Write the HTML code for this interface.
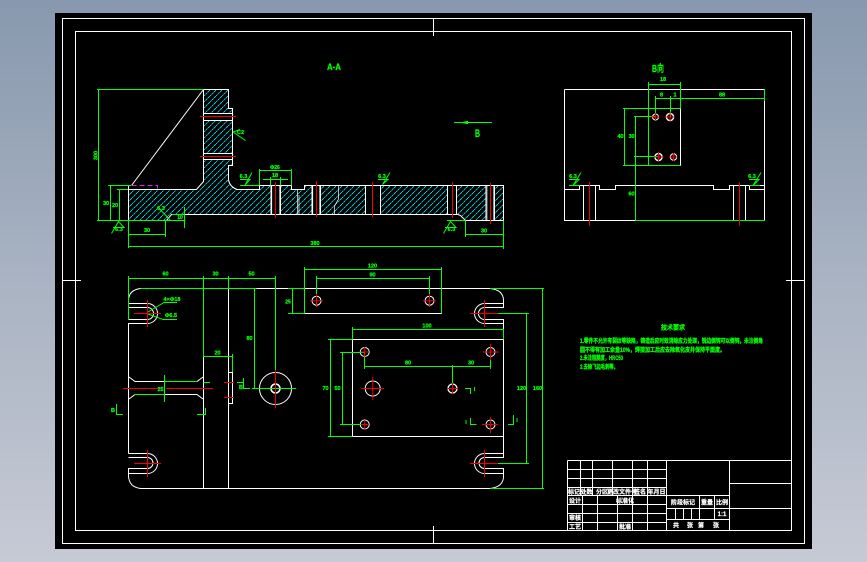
<!DOCTYPE html>
<html lang="zh"><head><meta charset="utf-8"><title>CAD</title>
<style>
html,body{margin:0;padding:0;width:867px;height:562px;overflow:hidden;background:linear-gradient(180deg,#8898ae 0%,#a9b3c2 50%,#c6cad5 100%)}
svg{position:absolute;left:0;top:0;display:block}
text{font-family:"Liberation Sans","Noto Sans CJK SC",sans-serif;font-weight:bold}
</style></head><body>
<svg width="867" height="562" viewBox="0 0 867 562" xmlns="http://www.w3.org/2000/svg">
<defs>
<pattern id="h" width="6" height="6" patternUnits="userSpaceOnUse"><path d="M-1 7L7 -1" stroke="#10e8f5" stroke-width=".8" stroke-dasharray="3 .5"/></pattern>
<clipPath id="sec"><path d="M203.5 89.5H228.5V108.5H232.5V165.5H228.5V180Q230 187 237 189.5H259.5V185.5H291.5V189.5H304.5V185.5H503.5V220.5H465.5L460.5 215.5L458 214.5H171.5L166.5 220.5H128.5V189.5H196.5L203.5 181.5Z"/></clipPath>
</defs>
<rect x="55" y="13" width="757" height="536" fill="#000"/>

<!-- hatching -->
<rect x="120" y="85" width="390" height="140" fill="url(#h)" clip-path="url(#sec)"/>
<g fill="#000">
<rect x="203" y="113.5" width="31" height="6.5"/><rect x="203" y="153.5" width="31" height="6"/>
<rect x="271" y="185" width="9" height="30"/><rect x="312" y="185" width="9" height="30"/><rect x="365.5" y="185" width="14.5" height="30"/><rect x="447.5" y="185" width="9" height="30"/><rect x="486" y="185" width="8.5" height="36"/>
</g>

<!-- frames -->
<g fill="none" stroke="#fff" stroke-width="1">
<rect x="62.5" y="18.5" width="742" height="525"/>
<rect x="75.5" y="31.5" width="716" height="499"/>
<path d="M433.5 18V36M433.5 526V543M62 280.5H81M786 280.5H805"/>
</g>

<!-- section A-A white -->
<g fill="none" stroke="#fff" stroke-width="1">
<path d="M203.5 89.5H228.5V108.5H232.5V165.5H228.5V180Q230 187 237 189.5H259.5V185.5H291.5V189.5H304.5V185.5H503.5V220.5H465.5L460.5 215.5L458 214.5H171.5L166.5 220.5H128.5V185.5M128.5 189.5H196.5L203.5 181.5V89.5"/>
<path d="M131.5 185.5L203.5 89.5"/>
<path d="M203.5 113.5H232.5M203.5 120.5H232.5M203.5 153.5H232.5M203.5 159.5H232.5"/>
<path d="M271 185.5V214.5M280.5 185.5V214.5M312 185.5V214.5M320.5 185.5V214.5M365.5 185.5V214.5M380.5 185.5V214.5M447.5 185.5V214.5M456.5 185.5V214.5M486 185.5V220.5M494.5 185.5V220.5"/>
<path d="M271.8 185.5V214.5M279.7 185.5V214.5M312.8 185.5V214.5M319.7 185.5V214.5M487 185.5V220.5M493.7 185.5V220.5" stroke-width=".6"/>
<path d="M297.5 190V214M299 195V214M338.5 185.5V199L334.5 206V214" stroke-width=".7"/>
</g>
<path d="M131.5 185.5H157.5V189.5" fill="none" stroke="#e020e0" stroke-dasharray="5 3"/>

<!-- view B white -->
<g fill="none" stroke="#fff" stroke-width="1">
<path d="M564.5 89.5H764.5V220.5H635.5M635.5 220.5H564.5V89.5"/>
<path d="M564.5 189.5H579.5V185.5H599.5V189.5H615.5V185.5H713.5V189.5H729.5V185.5H764.5M749.5 185.5V189.5H764.5"/>
<path d="M583.5 185.5V220.5M595.5 185.5V220.5M733.5 185.5V220.5M745.5 185.5V220.5"/>
<rect x="648.5" y="108.5" width="32" height="57"/>
<circle cx="655.5" cy="117" r="3"/><circle cx="670" cy="117" r="3.6" stroke-width="1.4"/><circle cx="658.5" cy="157" r="3.6" stroke-width="1.4"/><circle cx="673.5" cy="157" r="3.2"/>
</g>

<!-- plan white -->
<g fill="none" stroke="#fff" stroke-width="1">
<path d="M140.5 288.5H490Q503.5 290 503.5 300.5V307.5H484.5A6 6 0 0 0 484.5 319.5H503.5V453.5H484.5M484.5 303.5H503.5M484.5 303.5A10 10 0 0 0 484.5 323.5H503.5M484.5 453.5A10 10 0 0 0 484.5 473.5H503.5V468.5H484.5A5.500 5.500 0 0 1 484.5 457.500H503.5V453.500M503.5 473.5V477Q503 487 490 488.5H140.500Q129 487 128.500 476V468.500H147.500A5.500 5.500 0 0 0 147.500 457.500H128.500M128.500 453.500H147.500A10 10 0 0 1 147.500 473.500H128.500M128.500 453.500V323.500H147.500A10 10 0 0 0 147.500 303.500H128.500M128.500 307.500H147.500A6 6 0 0 1 147.500 319.500H128.500M128.500 303.500V300Q129 290 140.500 288.500"/>
<path d="M129 377L135 381.500H197L203 377M129 399L135 394.500H197L203 399"/>
<path d="M203.500 357V488.500M228.500 288.500V488.500"/>
<path d="M229 372.500H232.500V403.500H229"/>
<circle cx="275.500" cy="388.500" r="16"/><circle cx="275.500" cy="388.500" r="4.500" stroke-width="1.600"/>
<path d="M304.500 288.500V313.500H441.500V288.500"/>
<circle cx="316.500" cy="300.700" r="4.500"/><circle cx="429.500" cy="300.700" r="4.500"/>
<rect x="352.500" y="339.500" width="151" height="97"/>
<circle cx="364.700" cy="352" r="4.500"/><circle cx="490.500" cy="352" r="4.500"/><circle cx="364.700" cy="424.500" r="4.500"/><circle cx="490.500" cy="424.500" r="4.500"/>
<circle cx="372.700" cy="388.500" r="7.500"/><circle cx="452.500" cy="388.500" r="4.500" stroke-width="1.300"/>
</g>

<!-- green dimensions -->
<g fill="none" stroke="#00ff00" stroke-width="1">
<path d="M97 89.500H203.500M98.500 89.500V220.500M97 220.500H185.500M108 185.500H131M110.500 185.500V220.500M117 189.500H128M119.500 189.500V220.500M128.500 220.500V248M128.500 234.500H165.500M165.500 220.500V237M128 246.500H503.500M503.500 220.500V249M465.500 234.500H503.500M465.500 220.500V237M447 220.500H465.500M184.500 207V228M172 214.500H184.500"/>
<path d="M259.500 169V185.500M291.500 169V185.500M259.500 170.500H291.500M270.500 177V185.500M280.500 177V185.500M263 179.500H288"/>
<path d="M240 185.500H259M240 179.500H250L245 185L252 172.500M378 179.500H388L382.500 184.500L390 172.500M569 179.500H579L573 185.500L581 172.500M569 185.500H580M749 179.500H759L753 185.500L761 172.500M749 185.500H760"/>
<path d="M111.500 233.500L118.500 221.500L124 227.500H113M443.500 233.500L450.500 221.500L456 227.500H445M245.500 140.500L233 132L240 129.500M158 207L170 220"/>
<path d="M454 122.500H492"/><path d="M460 122.500L468 120.700V124.300Z" fill="#00ff00" stroke="none"/>

<path d="M648.500 82V165.500M680.500 82V108.500M648.500 84.500H680.500M655.500 96V117M670.500 96V117M655.500 98.500H764.500M764.500 89V101M623 108.500H680.500M623 165.500H680.500M624.500 108.500V165.500M634 116.500H655.500M634 156.500H658.500M635.500 116.500V220.500H765"/>

<path d="M128.500 276V320M203.500 276V357M228.500 276V288.500M275.500 276V370M128 278.500H275.500M140.500 288.500H256.500M254.500 288.500V388.500M252 388.500H296M203.500 356.500H232.500M232.500 354V372M164.500 375V402M164.500 381.500H197M134 394.500H164.500"/>
<path d="M148 312L164 302.500H177M148 314L163 319.500H177"/>
<path d="M116.500 404V414.500H123M197 414.500H205.500V408M203.500 382.500H210M237 382.500H243.500V388.500H250M243.500 382.500V378"/>
<path d="M304.500 267V313.500M441.500 267V313.500M304 269.500H442M316.500 276V300.500M429.500 276V300.500M316.500 278.500H429.500M292.500 288.500V313.500M288 288.500H304.500M288 313.500H304.500"/>
<path d="M352.500 327V339.500M503.500 329V339.500M352.500 329.500H503.500M328 339.500H352.500M328 436.500H352.500M330.500 339.500V436.500M342.500 352V424.500M340 352.500H365M340 424.500H365M364.500 352V369M364.500 366.500H490.500M490.500 352V369M452.500 365V385"/>
<path d="M497.500 313.500H529M497.500 463.500H529M526.500 313.500V463.500M490 288.500H544M490 488.500H544M542.500 288.500V488.500"/>
<path d="M465 388.500H470.500V394M470.500 418V424.500H476.500M508 424.500H513.500V415"/>
</g>

<!-- red centre lines -->
<g fill="none" stroke="#f00000" stroke-width="1">
<path d="M200 116.500H236M200 156.500H236M275.500 182V218M316.500 181V217M372.500 182V217M452.500 182V218M490.500 183V224"/>
<path d="M589.500 182V226M739.500 182V226M651 117H659.500M655.500 113V120M664.500 117H674M670 112V122M654 157H663.500M658.500 152V162M669 157H677M673.500 153V161"/>
<path d="M134 313.500H161M147.500 300V327M134 463.500H161M147.500 450V477M123 388.500H160M166 388.500H213M224 382.500H234M224 397.500H234M275.500 370V408"/>
<path d="M310 300.700H323M316.500 294V307M423 300.700H436M429.500 294V307"/>
<path d="M470 313.500H498M484.500 300V327M470 463.500H498M484.500 450V477M483 352H499M490.500 344V360M482 424.500H498M490.500 417V433M361 352H369M364.700 347V357M361 424.500H369M364.700 420V430M361.500 388.500H384M372.700 377V400M447 388.500H458M452.500 383V394"/>
</g>

<!-- green text -->
<g fill="#00ff00" stroke="#00ff00" stroke-width=".25" font-size="5.500" text-anchor="middle">
<text x="334" y="70" font-size="9" textLength="14" lengthAdjust="spacingAndGlyphs">A-A</text>
<text x="477.500" y="137" font-size="11" textLength="5" lengthAdjust="spacingAndGlyphs">B</text>
<text x="658" y="72" font-size="10" textLength="12" lengthAdjust="spacingAndGlyphs">B向</text>
<text x="95" y="158" transform="rotate(-90 95 155.500)">300</text>
<text x="106" y="205">30</text><text x="115" y="207">20</text>
<text x="147" y="232">30</text>
<text x="180" y="219" font-size="5">10</text>
<text x="161" y="210">6.3</text>
<text x="275" y="169" font-size="5">Φ26</text>
<text x="275" y="177">18</text>
<text x="240.500" y="134">C2</text>
<text x="243.500" y="178">6.3</text>
<text x="382" y="178">6.3</text>
<text x="573" y="178">6.3</text>
<text x="752" y="178">6.3</text>
<text x="119" y="231">6.3</text>
<text x="451.500" y="231">6.3</text>
<text x="315" y="245">380</text>
<text x="484" y="232.500">30</text>
<text x="663" y="81">18</text>
<text x="661.500" y="96.500">8</text><text x="675" y="96.500">1</text><text x="722" y="96.500">88</text>
<text x="620.500" y="138">40</text><text x="631.500" y="138">30</text><text x="631.500" y="195.500">60</text>
<text x="165.500" y="275.500">60</text><text x="215.500" y="275.500">30</text><text x="251.500" y="275.500">50</text>
<text x="217.500" y="354.500">20</text><text x="249.500" y="340">80</text>
<text x="288" y="303.500" font-size="5">25</text>
<text x="160.500" y="391">25</text>
<text x="172" y="301">4×Φ18</text><text x="171" y="317">Φ6.5</text>
<text x="113" y="412">B</text><text x="241" y="389">B</text>
<text x="372.500" y="267.500">120</text><text x="372.500" y="276.500">90</text>
<text x="427" y="327.500">100</text><text x="408" y="364.500">80</text><text x="471" y="364.500">30</text>
<text x="325.500" y="390">70</text><text x="337.500" y="390">50</text>
<text x="521.500" y="390">120</text><text x="537.500" y="390">160</text>
<text x="474.500" y="391">I</text><text x="466" y="424">I</text><text x="517" y="422">I</text>
</g>

<!-- tech notes -->
<g fill="#00ff00" stroke="#00ff00" stroke-width=".3">
<text x="661" y="329.500" font-size="6.500" textLength="24" lengthAdjust="spacingAndGlyphs">技术要求</text>
<text x="580" y="343" font-size="6" textLength="183" lengthAdjust="spacingAndGlyphs">1.零件不允许有裂纹等缺陷，铸造后应时效消除应力处理，锐边倒钝可以倒钝，未注倒角</text>
<text x="580" y="352" font-size="6" textLength="145" lengthAdjust="spacingAndGlyphs">圆不得有加工余量10%，焊接加工后应去除氧化皮并保持平面度。</text>
<text x="580" y="360" font-size="6" textLength="43" lengthAdjust="spacingAndGlyphs">2.未注粗糙度，HRC50</text>
<text x="580" y="369" font-size="6" textLength="38" lengthAdjust="spacingAndGlyphs">3.去除飞边毛刺等。</text>
</g>

<!-- title block -->
<g fill="none" stroke="#fff" stroke-width="1">
<path d="M567.500 460.500H791M567.500 469.500H666.500M567.500 478.500H666.500M567.500 487.500H666.500M567.500 495.500H729.500M567.500 504.500H666.500M567.500 513.500H666.500M567.500 522.500H666.500M666.500 508.500H791M666.500 519.500H729.500M729.500 483.500H791"/>
<path d="M567.500 460.500V530.500M580.500 460.500V495.500M592.500 460.500V495.500M612.500 460.500V495.500M632.500 460.500V530.500M647.500 460.500V530.500M666.500 460.500V530.500M582.500 495.500V530.500M597.500 495.500V530.500M617.500 495.500V530.500M729.500 460.500V530.500M699.500 495.500V519.500M714.500 495.500V519.500M675.500 508.500V519.500M683.500 508.500V519.500M691.500 508.500V519.500"/>
</g>
<g fill="#fff" stroke="#fff" stroke-width=".2" font-size="6" text-anchor="middle">
<text x="574" y="494">标记</text><text x="586.500" y="494">处数</text><text x="602" y="494">分区</text><text x="622" y="494">更改文件号</text><text x="640" y="494">签名</text><text x="656.500" y="494">年月日</text>
<text x="575" y="503">设计</text><text x="625" y="503">标准化</text>
<text x="575" y="520">审核</text><text x="575" y="529">工艺</text><text x="625" y="529">批准</text>
<text x="683" y="504.500">阶段标记</text><text x="707" y="504.500">重量</text><text x="722" y="504.500">比例</text>
<text x="722" y="516">1:1</text>
<text x="676" y="527.500">共</text><text x="690" y="527.500">张</text><text x="701" y="527.500">第</text><text x="716" y="527.500">张</text>
</g>
</svg>
</body></html>
